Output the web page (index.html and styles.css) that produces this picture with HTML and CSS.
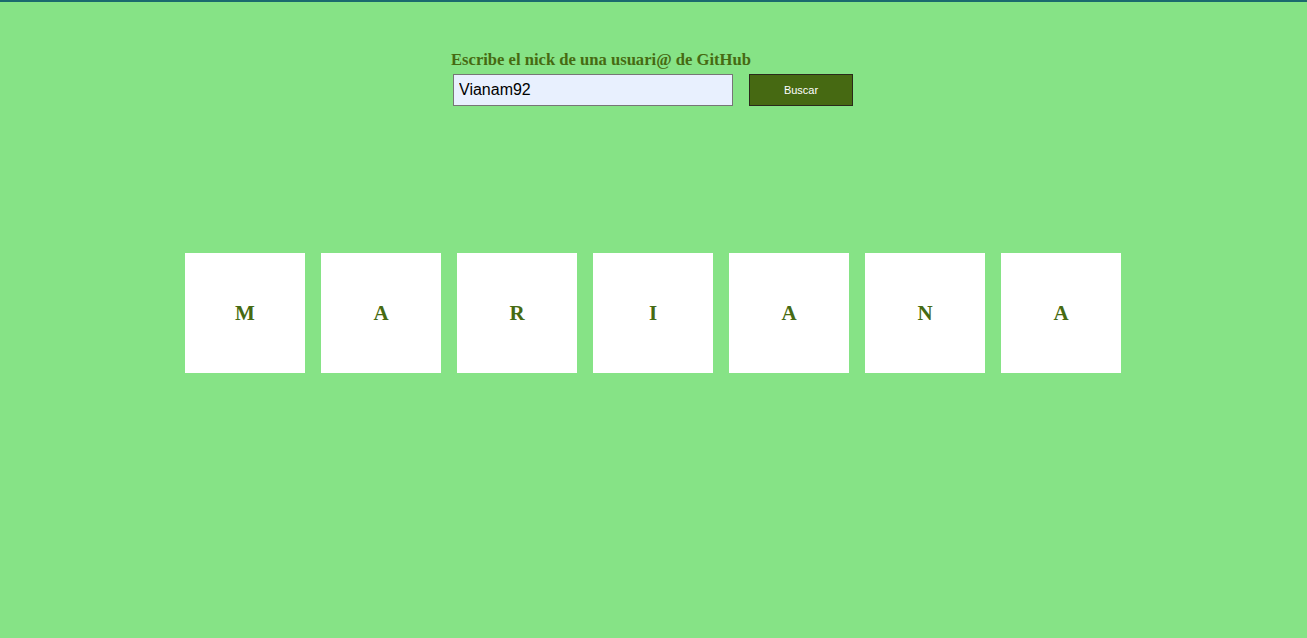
FILE: index.html
```html
<!DOCTYPE html>
<html lang="es">
<head>
<meta charset="utf-8">
<title>GitHub nick</title>
<link rel="stylesheet" href="styles.css">
</head>
<body>
<div class="topbar"></div>
<main class="page">
  <form class="search">
    <label class="search__label" for="nick">Escribe el nick de una usuari@ de GitHub</label>
    <div class="search__row">
      <input class="search__input" id="nick" type="text" value="Vianam92">
      <button class="search__btn" type="button">Buscar</button>
    </div>
  </form>
  <ul class="letters">
    <li class="letter">M</li>
    <li class="letter">A</li>
    <li class="letter">R</li>
    <li class="letter">I</li>
    <li class="letter">A</li>
    <li class="letter">N</li>
    <li class="letter">A</li>
  </ul>
</main>
</body>
</html>
```

FILE: styles.css
```css
html, body {
  margin: 0;
  padding: 0;
  height: 100%;
}
body {
  background: #86e386;
  font-family: "Liberation Serif", "Times New Roman", serif;
}
.topbar {
  height: 2px;
  background: #1b6a6e;
}
.page {
  display: flex;
  flex-direction: column;
  align-items: center;
  padding-right: 1px;
}
.search {
  margin-top: 48px;
  width: 404px;
  display: flex;
  flex-direction: column;
}
.search__label {
  color: #466a12;
  font-weight: bold;
  font-size: 16.6px;
  line-height: 20px;
}
.search__row {
  display: flex;
  gap: 16px;
  margin-top: 4px;
  padding-left: 2px;
}
.search__input {
  box-sizing: border-box;
  width: 280px;
  height: 32px;
  margin: 0;
  border: 1px solid #767676;
  background: #e8f0fe;
  font-family: "Liberation Sans", Arial, sans-serif;
  font-size: 16px;
  padding: 0 4px 0 5px;
  color: #000;
}
.search__btn {
  box-sizing: border-box;
  width: 104px;
  height: 32px;
  margin: 0;
  background: #466912;
  color: #fff;
  border: 1px solid #2a2a1a;
  font-family: "Liberation Sans", Arial, sans-serif;
  font-size: 11px;
}
.letters {
  list-style: none;
  margin: 147px 0 0;
  padding: 0;
  display: flex;
  gap: 16px;
}
.letter {
  width: 120px;
  height: 120px;
  background: #fff;
  display: flex;
  align-items: center;
  justify-content: center;
  color: #466a12;
  font-weight: bold;
  font-size: 21px;
  padding-top: 1px;
  box-sizing: border-box;
}
```
